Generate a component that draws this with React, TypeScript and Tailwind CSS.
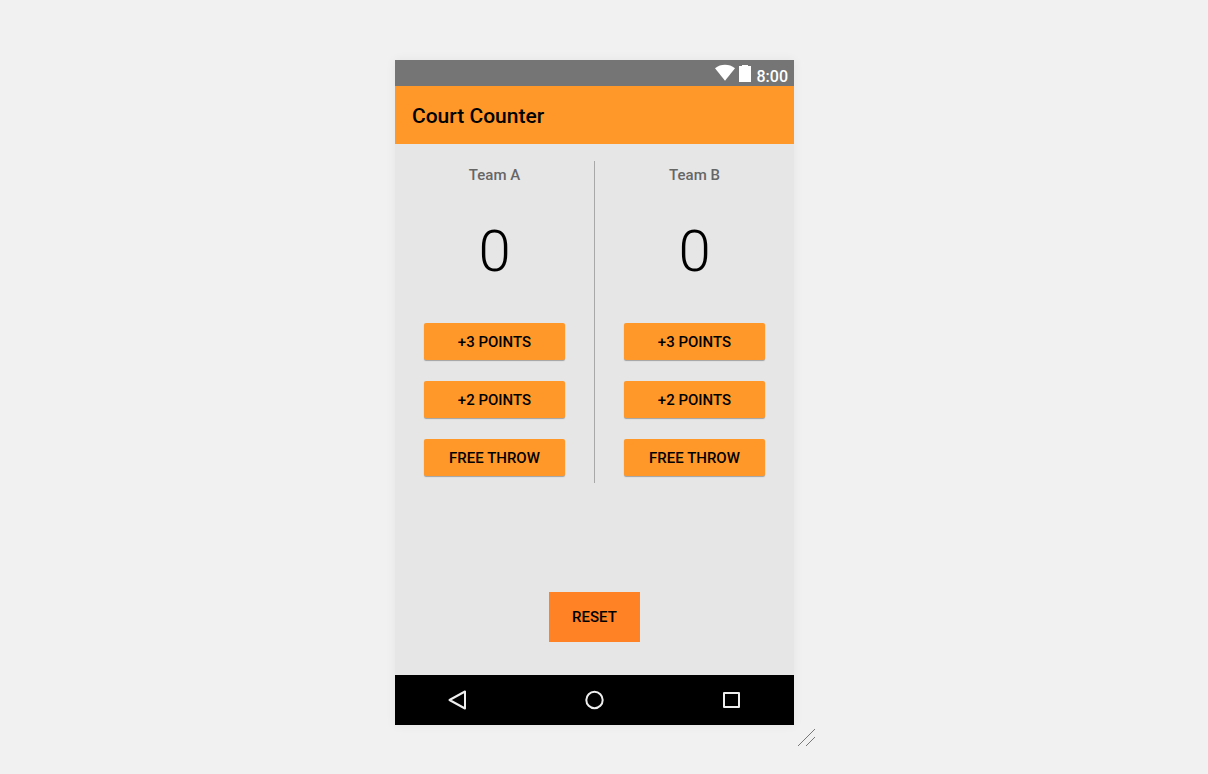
import { useState } from "react";

function StatusBar() {
  return (
    <div className="flex h-[26px] items-center justify-end bg-[#757575] pr-1.5 text-white">
      <svg aria-hidden="true" width="20" height="18" viewBox="0 0 20 18" fill="currentColor">
        <path d="M0 4.200C3 1.700 6.300 .7 10 .7s7 1 10 3.500L10 16.800z" />
      </svg>
      <svg aria-hidden="true" className="ml-1" width="12" height="18" viewBox="0 0 12 18" fill="currentColor">
        <path d="M3 1h6v1h3v16H0V2h3z" />
      </svg>
      <span className="ml-1.5 pt-2 text-[16px] leading-5 font-medium">8:00</span>
    </div>
  );
}

type TeamProps = {
  name: string;
  score: number;
  onAdd: (points: number) => void;
};

const actions = [
  { label: "+3 POINTS", points: 3 },
  { label: "+2 POINTS", points: 2 },
  { label: "FREE THROW", points: 1 },
];

function Team({ name, score, onAdd }: TeamProps) {
  return (
    <section className="flex min-w-0 flex-1 flex-col items-center px-[29px] pb-[7px]">
      <h2 className="text-[15px] leading-7 font-medium text-[#666666]">{name}</h2>
      <output className="mt-6 text-[58px] leading-[76px] font-light" aria-label={`${name} score`}>
        {score}
      </output>
      <div className="mt-[34px] flex w-full flex-col gap-[21px]">
        {actions.map((action) => (
          <button
            key={action.label}
            type="button"
            onClick={() => onAdd(action.points)}
            className="h-[37px] w-full rounded-xs bg-[#ff9829] pt-px text-[15px] font-medium shadow-[0_1px_1px_rgba(0,0,0,0.3)]"
          >
            {action.label}
          </button>
        ))}
      </div>
    </section>
  );
}

function NavigationBar() {
  return (
    <nav className="flex h-[50px] items-center justify-between bg-black px-[52px] text-[#eeeeee]">
      <button type="button" aria-label="Back">
        <svg width="20" height="20" viewBox="0 0 20 20" fill="none" stroke="currentColor" strokeWidth="2" strokeLinejoin="round">
          <path d="M18 1.500v17L2.500 10z" />
        </svg>
      </button>
      <button type="button" aria-label="Home">
        <svg width="20" height="20" viewBox="0 0 20 20" fill="none" stroke="currentColor" strokeWidth="2">
          <circle cx="9.500" cy="10" r="8.200" />
        </svg>
      </button>
      <button type="button" aria-label="Recent apps">
        <svg width="20" height="20" viewBox="0 0 20 20" fill="none" stroke="currentColor" strokeWidth="2" strokeLinejoin="round">
          <path d="M2 3h15v14H2z" />
        </svg>
      </button>
    </nav>
  );
}

export default function App() {
  const [scoreA, setScoreA] = useState(0);
  const [scoreB, setScoreB] = useState(0);

  const reset = () => {
    setScoreA(0);
    setScoreB(0);
  };

  return (
    <div className="flex min-h-screen items-start justify-center bg-[#f1f1f1] pt-[60px] pr-[19px] pb-12 font-['Roboto',sans-serif] text-black">
      <div className="relative w-full max-w-[399px] shadow-[0_0_10px_rgba(0,0,0,0.06)]">
        <StatusBar />
        <header className="flex h-[58px] items-center bg-[#ff9829] px-[17px] pt-0.5">
          <h1 className="text-[21px] leading-7 font-medium">Court Counter</h1>
        </header>
        <main className="flex flex-col items-center bg-[#e6e6e6] pt-[17px] pb-[33px]">
          <div className="flex w-full">
            <Team name="Team A" score={scoreA} onAdd={(points) => setScoreA(scoreA + points)} />
            <div className="w-px bg-[#a8a8a8]" />
            <Team name="Team B" score={scoreB} onAdd={(points) => setScoreB(scoreB + points)} />
          </div>
          <button
            type="button"
            onClick={reset}
            className="mt-[109px] h-[50px] bg-[#ff8224] px-[23px] text-[15px] font-medium"
          >
            RESET
          </button>
        </main>
        <NavigationBar />
        <svg
          aria-hidden="true"
          className="absolute top-full left-full mt-1 ml-[3px]"
          width="18"
          height="18"
          viewBox="0 0 18 18"
          stroke="#777777"
          shapeRendering="crispEdges"
        >
          <path d="M.7 17.300L17.700 .3M8.700 17.300L17.700 8.300" />
        </svg>
      </div>
    </div>
  );
}
